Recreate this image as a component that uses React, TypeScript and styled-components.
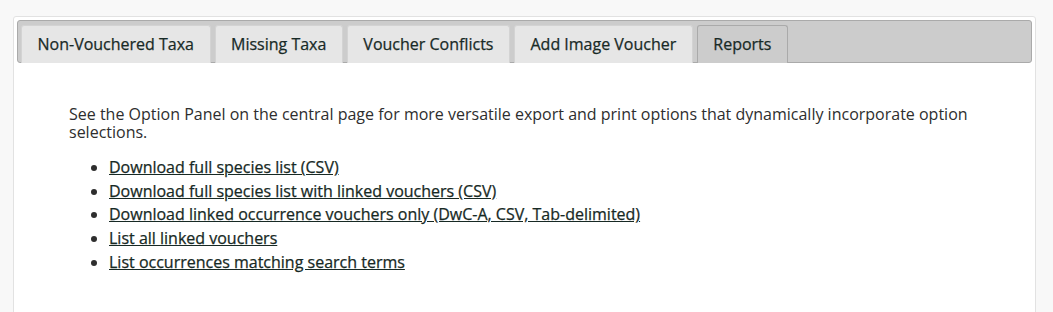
import React from "react";
import styled, { createGlobalStyle } from "styled-components";

const GlobalStyle = createGlobalStyle`
  html, body {
    margin: 0;
    padding: 0;
    background: #f8f8f8;
    font-family: "Open Sans", "Liberation Sans", sans-serif;
  }
`;

const Page = styled.div`
  height: 312px;
  overflow: hidden;
  padding: 16px 0 0 13px;
  box-sizing: border-box;
`;

const Panel = styled.div`
  width: 1023px;
  height: 400px;
  box-sizing: border-box;
  background: #fff;
  border: 1px solid #e2e2e2;
  border-radius: 3px 3px 0 0;
  padding: 3px;
`;

const TabBar = styled.ul`
  display: flex;
  gap: 4px;
  margin: 0;
  padding: 4px 3px 0;
  list-style: none;
  background: #cccccc;
  border: 1px solid #aaaaaa;
  border-radius: 3px;
  height: 43px;
  box-sizing: border-box;
  align-items: flex-end;
`;

const Tab = styled.li<{ $active?: boolean }>`
  height: 38px;
  box-sizing: border-box;
  padding: 0 15.5px;
  line-height: 36px;
  font-size: 16px;
  color: #182a26;
  background: ${(p) => (p.$active ? "#cccccc" : "#e6e6e6")};
  border: 1px solid ${(p) => (p.$active ? "#aaaaaa" : "#d3d3d3")};
  border-bottom: none;
  border-radius: 3px 3px 0 0;
  margin-bottom: -1px;
  white-space: nowrap;
  cursor: pointer;
  -webkit-text-stroke: 0.25px #182a26;
`;

const Content = styled.div`
  padding: 43px 52px 0;
  color: #2e2e2e;
  font-size: 16px;
`;

const Intro = styled.p`
  margin: 0 0 15px;
  line-height: 17.6px;
  max-width: 910px;
`;

const LinkList = styled.ul`
  margin: 0;
  padding-left: 40px;
`;

const LinkItem = styled.li`
  line-height: 23.6px;
`;

const Link = styled.a`
  color: #172924;
  text-decoration: underline;
  -webkit-text-stroke: 0.25px #172924;
`;

const tabs = [
  "Non-Vouchered Taxa",
  "Missing Taxa",
  "Voucher Conflicts",
  "Add Image Voucher",
  "Reports",
];

const links = [
  "Download full species list (CSV)",
  "Download full species list with linked vouchers (CSV)",
  "Download linked occurrence vouchers only (DwC-A, CSV, Tab-delimited)",
  "List all linked vouchers",
  "List occurrences matching search terms",
];

export default function App() {
  return (
    <>
      <GlobalStyle />
      <Page>
        <Panel>
          <TabBar>
            {tabs.map((t) => (
              <Tab key={t} $active={t === "Reports"}>
                {t}
              </Tab>
            ))}
          </TabBar>
          <Content>
            <Intro>
              See the Option Panel on the central page for more versatile export
              and print options that dynamically incorporate option selections.
            </Intro>
            <LinkList>
              {links.map((l) => (
                <LinkItem key={l}>
                  <Link href="#">{l}</Link>
                </LinkItem>
              ))}
            </LinkList>
          </Content>
        </Panel>
      </Page>
    </>
  );
}
